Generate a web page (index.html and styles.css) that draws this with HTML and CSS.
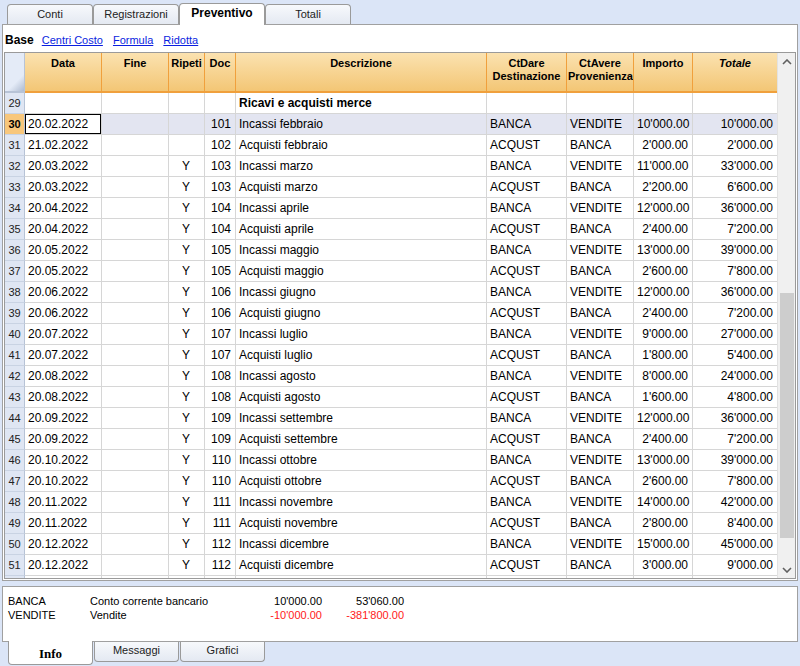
FILE: index.html
```html
<!DOCTYPE html>
<html lang="it">
<head>
  <meta charset="UTF-8">
  <title>Preventivo</title>
  <link rel="stylesheet" href="styles.css">
</head>
<body>

<div class="tabs">
  <div class="tab">Conti</div>
  <div class="tab">Registrazioni</div>
  <div class="tab active">Preventivo</div>
  <div class="tab">Totali</div>
</div>

<div class="panel">
  <div class="views">
    <b>Base</b>
    <a href="#">Centri Costo</a>
    <a href="#">Formula</a>
    <a href="#">Ridotta</a>
  </div>

  <div class="grid">
    <div class="table">
      <div class="row head">
        <div class="corner"></div>
        <div>Data</div>
        <div>Fine</div>
        <div>Ripeti</div>
        <div>Doc</div>
        <div>Descrizione</div>
        <div>CtDare<br>Destinazione</div>
        <div>CtAvere<br>Provenienza</div>
        <div>Importo</div>
        <div><i>Totale</i></div>
      </div>

      <div class="row"><div class="num">29</div><div></div><div></div><div></div><div></div><div class="bold">Ricavi e acquisti merce</div><div></div><div></div><div></div><div></div></div>
      <div class="row sel"><div class="num">30</div><div class="cursor">20.02.2022</div><div></div><div class="c"></div><div class="r">101</div><div>Incassi febbraio</div><div>BANCA</div><div>VENDITE</div><div class="r">10'000.00</div><div class="r">10'000.00</div></div>
      <div class="row"><div class="num">31</div><div>21.02.2022</div><div></div><div class="c"></div><div class="r">102</div><div>Acquisti febbraio</div><div>ACQUST</div><div>BANCA</div><div class="r">2'000.00</div><div class="r">2'000.00</div></div>
      <div class="row"><div class="num">32</div><div>20.03.2022</div><div></div><div class="c">Y</div><div class="r">103</div><div>Incassi marzo</div><div>BANCA</div><div>VENDITE</div><div class="r">11'000.00</div><div class="r">33'000.00</div></div>
      <div class="row"><div class="num">33</div><div>20.03.2022</div><div></div><div class="c">Y</div><div class="r">103</div><div>Acquisti marzo</div><div>ACQUST</div><div>BANCA</div><div class="r">2'200.00</div><div class="r">6'600.00</div></div>
      <div class="row"><div class="num">34</div><div>20.04.2022</div><div></div><div class="c">Y</div><div class="r">104</div><div>Incassi aprile</div><div>BANCA</div><div>VENDITE</div><div class="r">12'000.00</div><div class="r">36'000.00</div></div>
      <div class="row"><div class="num">35</div><div>20.04.2022</div><div></div><div class="c">Y</div><div class="r">104</div><div>Acquisti aprile</div><div>ACQUST</div><div>BANCA</div><div class="r">2'400.00</div><div class="r">7'200.00</div></div>
      <div class="row"><div class="num">36</div><div>20.05.2022</div><div></div><div class="c">Y</div><div class="r">105</div><div>Incassi maggio</div><div>BANCA</div><div>VENDITE</div><div class="r">13'000.00</div><div class="r">39'000.00</div></div>
      <div class="row"><div class="num">37</div><div>20.05.2022</div><div></div><div class="c">Y</div><div class="r">105</div><div>Acquisti maggio</div><div>ACQUST</div><div>BANCA</div><div class="r">2'600.00</div><div class="r">7'800.00</div></div>
      <div class="row"><div class="num">38</div><div>20.06.2022</div><div></div><div class="c">Y</div><div class="r">106</div><div>Incassi giugno</div><div>BANCA</div><div>VENDITE</div><div class="r">12'000.00</div><div class="r">36'000.00</div></div>
      <div class="row"><div class="num">39</div><div>20.06.2022</div><div></div><div class="c">Y</div><div class="r">106</div><div>Acquisti giugno</div><div>ACQUST</div><div>BANCA</div><div class="r">2'400.00</div><div class="r">7'200.00</div></div>
      <div class="row"><div class="num">40</div><div>20.07.2022</div><div></div><div class="c">Y</div><div class="r">107</div><div>Incassi luglio</div><div>BANCA</div><div>VENDITE</div><div class="r">9'000.00</div><div class="r">27'000.00</div></div>
      <div class="row"><div class="num">41</div><div>20.07.2022</div><div></div><div class="c">Y</div><div class="r">107</div><div>Acquisti luglio</div><div>ACQUST</div><div>BANCA</div><div class="r">1'800.00</div><div class="r">5'400.00</div></div>
      <div class="row"><div class="num">42</div><div>20.08.2022</div><div></div><div class="c">Y</div><div class="r">108</div><div>Incassi agosto</div><div>BANCA</div><div>VENDITE</div><div class="r">8'000.00</div><div class="r">24'000.00</div></div>
      <div class="row"><div class="num">43</div><div>20.08.2022</div><div></div><div class="c">Y</div><div class="r">108</div><div>Acquisti agosto</div><div>ACQUST</div><div>BANCA</div><div class="r">1'600.00</div><div class="r">4'800.00</div></div>
      <div class="row"><div class="num">44</div><div>20.09.2022</div><div></div><div class="c">Y</div><div class="r">109</div><div>Incassi settembre</div><div>BANCA</div><div>VENDITE</div><div class="r">12'000.00</div><div class="r">36'000.00</div></div>
      <div class="row"><div class="num">45</div><div>20.09.2022</div><div></div><div class="c">Y</div><div class="r">109</div><div>Acquisti settembre</div><div>ACQUST</div><div>BANCA</div><div class="r">2'400.00</div><div class="r">7'200.00</div></div>
      <div class="row"><div class="num">46</div><div>20.10.2022</div><div></div><div class="c">Y</div><div class="r">110</div><div>Incassi ottobre</div><div>BANCA</div><div>VENDITE</div><div class="r">13'000.00</div><div class="r">39'000.00</div></div>
      <div class="row"><div class="num">47</div><div>20.10.2022</div><div></div><div class="c">Y</div><div class="r">110</div><div>Acquisti ottobre</div><div>ACQUST</div><div>BANCA</div><div class="r">2'600.00</div><div class="r">7'800.00</div></div>
      <div class="row"><div class="num">48</div><div>20.11.2022</div><div></div><div class="c">Y</div><div class="r">111</div><div>Incassi novembre</div><div>BANCA</div><div>VENDITE</div><div class="r">14'000.00</div><div class="r">42'000.00</div></div>
      <div class="row"><div class="num">49</div><div>20.11.2022</div><div></div><div class="c">Y</div><div class="r">111</div><div>Acquisti novembre</div><div>ACQUST</div><div>BANCA</div><div class="r">2'800.00</div><div class="r">8'400.00</div></div>
      <div class="row"><div class="num">50</div><div>20.12.2022</div><div></div><div class="c">Y</div><div class="r">112</div><div>Incassi dicembre</div><div>BANCA</div><div>VENDITE</div><div class="r">15'000.00</div><div class="r">45'000.00</div></div>
      <div class="row"><div class="num">51</div><div>20.12.2022</div><div></div><div class="c">Y</div><div class="r">112</div><div>Acquisti dicembre</div><div>ACQUST</div><div>BANCA</div><div class="r">3'000.00</div><div class="r">9'000.00</div></div>
      <div class="row"><div class="num"></div><div></div><div></div><div></div><div></div><div></div><div></div><div></div><div></div><div></div></div>
    </div>

    <div class="scrollbar">
      <div class="arrow">
        <svg width="10" height="6" viewBox="0 0 10 6"><polyline points="1,5 5,1 9,5" fill="none" stroke="#606060" stroke-width="1.6"/></svg>
      </div>
      <div class="track"><div class="thumb"></div></div>
      <div class="arrow">
        <svg width="10" height="6" viewBox="0 0 10 6"><polyline points="1,1 5,5 9,1" fill="none" stroke="#606060" stroke-width="1.6"/></svg>
      </div>
    </div>
  </div>
</div>

<div class="info">
  <div class="info-row">
    <span class="acc">BANCA</span>
    <span class="desc">Conto corrente bancario</span>
    <span class="amt">10'000.00</span>
    <span class="amt">53'060.00</span>
  </div>
  <div class="info-row">
    <span class="acc">VENDITE</span>
    <span class="desc">Vendite</span>
    <span class="amt neg">-10'000.00</span>
    <span class="amt neg">-381'800.00</span>
  </div>
</div>

<div class="tabs bottom">
  <div class="tab active">Info</div>
  <div class="tab">Messaggi</div>
  <div class="tab">Grafici</div>
</div>

</body>
</html>
```

FILE: styles.css
```css
body {
  margin: 0;
  width: 800px;
  height: 666px;
  overflow: hidden;
  background: #dbe5f7;
  font-family: 'Liberation Sans', Arial, sans-serif;
  font-size: 11px;
  color: #000;
}

/* tab strips */
.tabs {
  display: flex;
  align-items: flex-end;
  height: 24px;
  padding-left: 7px;
}
.tab {
  width: 84px;
  height: 19px;
  line-height: 19px;
  text-align: center;
  color: #222;
  background: linear-gradient(#f7f9fc, #e4e9f2);
  border: 1px solid #9a9a9a;
  border-bottom: none;
  border-radius: 4px 4px 0 0;
}
.tab.active {
  position: relative;
  height: 21px;
  line-height: 19px;
  margin-bottom: -1px;
  background: #fff;
  font-weight: bold;
  font-size: 12px;
  color: #000;
}
.tabs.bottom {
  align-items: flex-start;
  height: 25px;
  padding-left: 8px;
}
.tabs.bottom .tab {
  width: 83px;
  margin-right: 1px;
  border: 1px solid #9a9a9a;
  border-top: none;
  border-radius: 0 0 4px 4px;
  height: 19px;
  line-height: 17px;
}
.tabs.bottom .tab.active {
  height: 23px;
  line-height: 25px;
  margin-top: -1px;
  margin-bottom: 0;
  font-family: 'Liberation Serif', serif;
  font-size: 13px;
}

/* main panel */
.panel {
  margin: 0 2px;
  padding: 0 1px 1px;
  background: #fff;
  border: 1px solid #a0a0a0;
}
.views {
  height: 27px;
  line-height: 30px;
  padding-left: 1px;
}
.views b {
  font-size: 12px;
  margin-right: 5px;
}
.views a {
  color: #0a1ee0;
  margin-right: 7px;
}

.grid {
  display: flex;
  height: 525px;
  overflow: hidden;
  border: 1px solid #9a9a9a;
}
.table {
  width: 772px;
}
.row {
  display: grid;
  grid-template-columns: 20px 77px 67px 36px 31px 251px 80px 67px 59px 85px;
  height: 21px;
  font-size: 12px;
}
.row > div {
  box-sizing: border-box;
  border-right: 1px solid #d6d6d6;
  border-bottom: 1px solid #d6d6d6;
  padding: 0 4px 0 3px;
  line-height: 20px;
  white-space: nowrap;
  overflow: hidden;
}
.row .c { text-align: center; }
.row .r { text-align: right; }
.row .bold { font-weight: bold; }

.row .num {
  padding: 0;
  text-align: center;
  font-size: 11px;
  color: #222;
  background: #dfe6f3;
  border-right-color: #b7c3d6;
  border-bottom-color: #c9d3e3;
}

.row.head {
  height: 40px;
  font-size: 11px;
  font-weight: bold;
}
.row.head > div {
  text-align: center;
  line-height: 13px;
  padding: 4px 1px 0;
  background: linear-gradient(#fbe2b0, #f3c675);
  border-right-color: #f0a03c;
  border-bottom: 2px solid #f0a03c;
}
.row.head .corner {
  background: linear-gradient(135deg, #e4ebf7 70%, #aebbd0);
  border-right-color: #b7c3d6;
  border-bottom-color: #b7c3d6;
}

.row.sel > div {
  background: #e3e5f1;
}
.row.sel .num {
  background: #f8c77c;
  font-weight: bold;
  color: #000;
}
.row.sel .cursor {
  background: #fff;
  box-shadow: inset 0 0 0 1px #000;
}

/* scrollbar */
.scrollbar {
  flex: 1;
  display: flex;
  flex-direction: column;
  background: #f0f0f0;
  border-left: 1px solid #e2e2e2;
}
.arrow {
  height: 17px;
  display: flex;
  align-items: center;
  justify-content: center;
}
.track {
  flex: 1;
}
.thumb {
  margin: 223px 1px 0 2px;
  height: 245px;
  background: #cdcdcd;
}

/* info area */
.info {
  margin: 5px 2px 0;
  height: 47px;
  padding-top: 7px;
  background: #fff;
  border: 1px solid #a0a0a0;
}
.info-row {
  display: flex;
  height: 14px;
  line-height: 14px;
}
.info-row .acc {
  width: 82px;
  padding-left: 5px;
}
.info-row .desc {
  width: 150px;
}
.info-row .amt {
  width: 82px;
  text-align: right;
}
.info-row .neg {
  color: #ff1a1a;
}
```
